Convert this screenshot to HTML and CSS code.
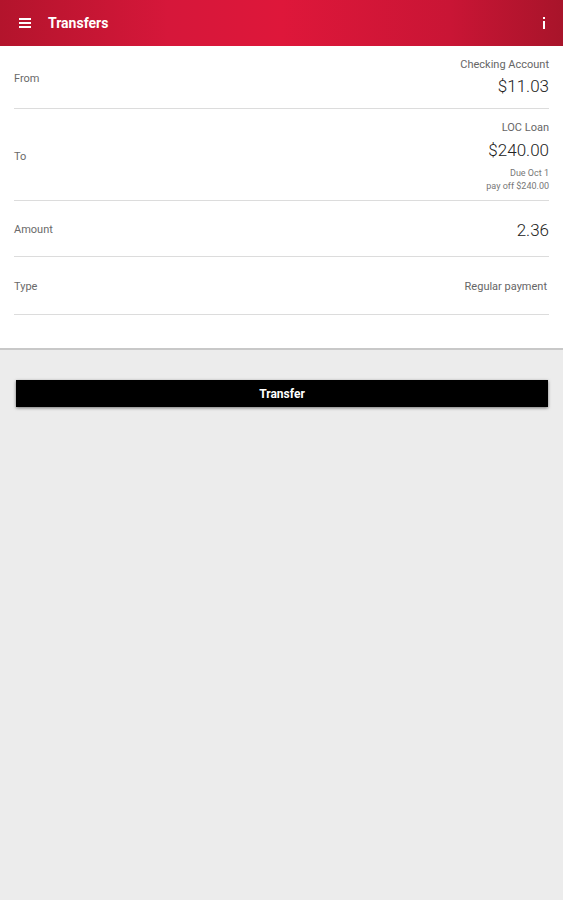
FILE: index.html
```html
<!DOCTYPE html>
<html lang="en">
<head>
    <meta charset="UTF-8">
    <meta name="viewport" content="width=device-width, initial-scale=1.0">
    <title>Transfers</title>
    <link rel="stylesheet" href="styles.css">
</head>
<body>
    <header class="toolbar">
        <svg class="menu-icon" width="12" height="10" viewBox="0 0 12 10">
            <rect x="0" y="0" width="12" height="2" fill="#fff"/>
            <rect x="0" y="4" width="12" height="2" fill="#fff"/>
            <rect x="0" y="8" width="12" height="2" fill="#fff"/>
        </svg>
        <h1 class="title">Transfers</h1>
        <svg class="info-icon" width="4" height="12" viewBox="0 0 4 12">
            <rect x="1" y="0" width="2" height="2" fill="#fff"/>
            <rect x="1" y="4" width="2" height="8" fill="#fff"/>
        </svg>
    </header>

    <div class="form-card">
        <div class="row row-from">
            <span class="label">From</span>
            <div class="value">
                <div class="name">Checking Account</div>
                <div class="money">$11.03</div>
            </div>
        </div>
        <div class="row row-to">
            <span class="label">To</span>
            <div class="value">
                <div class="name">LOC Loan</div>
                <div class="money">$240.00</div>
                <div class="note">Due Oct 1</div>
                <div class="note">pay off $240.00</div>
            </div>
        </div>
        <div class="row row-amount">
            <span class="label">Amount</span>
            <div class="value">
                <div class="money">2.36</div>
            </div>
        </div>
        <div class="row row-type">
            <span class="label">Type</span>
            <div class="value">
                <div class="name type-name">Regular payment</div>
            </div>
        </div>
    </div>

    <div class="actions">
        <button class="transfer-btn">Transfer</button>
    </div>
</body>
</html>
```

FILE: styles.css
```css
body {
    margin: 0;
    font-family: Roboto, "Liberation Sans", sans-serif;
    background: #ececec;
    height: 900px;
}
.toolbar {
    height: 46px;
    display: flex;
    align-items: center;
    padding: 0 17px 0 19px;
    background: linear-gradient(90deg, #b3142c 0%, #d6173a 30%, #de173a 50%, #c91535 80%, #a8142a 100%);
    box-sizing: border-box;
}
.menu-icon {
    flex: none;
}
.title {
    margin: 0 0 0 17px;
    flex: 1;
    font-size: 14px;
    font-weight: bold;
    color: #fff;
}
.info-icon {
    flex: none;
}
.form-card {
    background: #fff;
    padding: 0 14px 33px 14px;
    border-bottom: 2px solid #c8c8c8;
}
.row {
    display: flex;
    justify-content: space-between;
    align-items: center;
    border-bottom: 1px solid #dcdcdc;
    box-sizing: border-box;
}
.row-from {
    height: 63px;
    padding-top: 2px;
}
.row-to {
    height: 92px;
    padding-top: 4px;
}
.row-amount {
    height: 56px;
    padding-top: 2px;
}
.row-type {
    height: 58px;
    padding-top: 2px;
}
.label {
    font-size: 11px;
    color: #6a6a6a;
}
.value {
    text-align: right;
}
.name {
    font-size: 11px;
    color: #666;
    line-height: 14px;
}
.type-name {
    margin-right: 2px;
}
.money {
    font-size: 17px;
    font-weight: 300;
    color: #222;
    line-height: 24px;
}
.row-from .name {
    margin-bottom: 2px;
}
.note {
    font-size: 9px;
    color: #777;
    line-height: 13px;
}
.row-to .name {
    margin-bottom: 3px;
}
.row-to .money {
    margin-bottom: 5px;
}
.actions {
    padding: 30px 15px 0 16px;
}
.transfer-btn {
    display: block;
    width: 100%;
    height: 27px;
    padding-top: 2px;
    background: #000;
    color: #fff;
    border: none;
    font-family: Roboto, "Liberation Sans", sans-serif;
    font-size: 12px;
    font-weight: bold;
    box-shadow: 0 1px 3px rgba(0,0,0,0.5);
}
```
